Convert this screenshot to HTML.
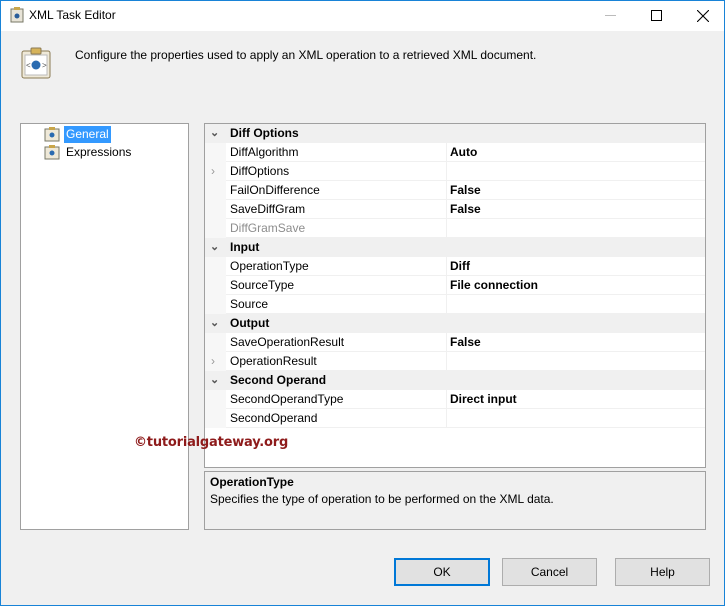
<!DOCTYPE html>
<html><head><style>
*{margin:0;padding:0;box-sizing:border-box}
body{width:725px;height:606px;background:#f0f0f0;font-family:"Liberation Sans",sans-serif;font-size:12px;color:#000;position:relative;overflow:hidden}
.abs{position:absolute}
#win{left:0;top:0;width:725px;height:606px;border:1px solid #1883d7}
#title{left:1px;top:1px;width:723px;height:30px;background:#fff}
.row{position:absolute;left:0;width:500px;height:19px;line-height:18px}
.cat{background:#f0f0f0;font-weight:bold}
.prop{background:#fff;border-bottom:1px solid #f0f0f0}
.prop .n{position:absolute;left:25px}
.prop .v{position:absolute;left:241px;font-weight:bold}
.prop .sep{position:absolute;left:240px;top:0;width:1px;height:19px;background:#f0f0f0}
.cat .n{position:absolute;left:25px}
.arr{position:absolute;left:5px;top:0;color:#555;font-size:11px}
.btn{position:absolute;top:558px;height:28px;background:#e1e1e1;border:1px solid #adadad;text-align:center;line-height:26px;font-size:12px}
</style></head><body>
<div id="win" class="abs"></div>
<div id="title" class="abs">
<svg class="abs" style="left:9px;top:6px" width="14" height="16"><rect x="1" y="2" width="12" height="13" fill="#e8e4d8" stroke="#776"/><rect x="4" y="0" width="6" height="3" fill="#c9a64a"/><circle cx="7" cy="9" r="2.5" fill="#2a5d9a"/></svg>
<div class="abs" style="left:28px;top:7px;font-size:12px">XML Task Editor</div>
<div class="abs" style="left:604px;top:14px;width:11px;height:1px;background:#bbb"></div>
<div class="abs" style="left:650px;top:9px;width:11px;height:11px;border:1px solid #000"></div>
<svg class="abs" style="left:696px;top:9px" width="12" height="12"><path d="M0 0L12 12M12 0L0 12" stroke="#000" stroke-width="1.1"/></svg>
</div>
<svg class="abs" style="left:21px;top:47px" width="30" height="32"><rect x="1" y="4" width="28" height="27" rx="2" fill="#efe9d8" stroke="#8a7a55"/><rect x="4" y="8" width="22" height="20" fill="#fff" stroke="#bbb"/><rect x="10" y="1" width="10" height="6" rx="1" fill="#d6b35a" stroke="#8a7a55"/><circle cx="15" cy="18" r="4.5" fill="#2a6bb0"/><text x="5" y="21" font-size="8" fill="#555">&lt;</text><text x="21" y="21" font-size="8" fill="#555">&gt;</text></svg>
<div class="abs" style="left:75px;top:48px">Configure the properties used to apply an XML operation to a retrieved XML document.</div>
<div class="abs" style="left:20px;top:123px;width:169px;height:407px;background:#fff;border:1px solid #a0a0a0">
<svg class="abs" style="left:23px;top:2px" width="16" height="16"><rect x="1" y="3" width="14" height="12" fill="#efe9d8" stroke="#776"/><rect x="5" y="1" width="6" height="3" fill="#c9a64a"/><circle cx="8" cy="9" r="2.5" fill="#2a6bb0"/></svg>
<div class="abs" style="left:43px;top:2px;background:#3399ff;color:#fff;padding:0 2px;height:17px;line-height:16px">General</div>
<svg class="abs" style="left:23px;top:20px" width="16" height="16"><rect x="1" y="3" width="14" height="12" fill="#efe9d8" stroke="#776"/><rect x="5" y="1" width="6" height="3" fill="#c9a64a"/><circle cx="8" cy="9" r="2.5" fill="#2a6bb0"/></svg>
<div class="abs" style="left:45px;top:21px">Expressions</div>
</div>
<div class="abs" style="left:204px;top:123px;width:502px;height:345px;background:#fff;border:1px solid #a0a0a0;overflow:hidden">
<div class="abs" style="left:0;top:0;width:21px;height:304px;background:#f7f7f7"></div>
<div class="row cat" style="top:0"><span class="arr">&#8964;</span><span class="n">Diff Options</span></div>
<div class="row prop" style="top:19px;left:21px"><span class="n" style="left:4px">DiffAlgorithm</span><span class="sep" style="left:220px"></span><span class="v" style="left:224px">Auto</span></div>
<div class="row prop" style="top:38px;left:21px"><span class="n" style="left:4px">DiffOptions</span><span class="sep" style="left:220px"></span></div>
<div class="abs" style="left:6px;top:40px;color:#999">&#8250;</div>
<div class="row prop" style="top:57px;left:21px"><span class="n" style="left:4px">FailOnDifference</span><span class="sep" style="left:220px"></span><span class="v" style="left:224px">False</span></div>
<div class="row prop" style="top:76px;left:21px"><span class="n" style="left:4px">SaveDiffGram</span><span class="sep" style="left:220px"></span><span class="v" style="left:224px">False</span></div>
<div class="row prop" style="top:95px;left:21px"><span class="n" style="left:4px;color:#8d8d8d">DiffGramSave</span><span class="sep" style="left:220px"></span></div>
<div class="row cat" style="top:114px"><span class="arr">&#8964;</span><span class="n">Input</span></div>
<div class="row prop" style="top:133px;left:21px"><span class="n" style="left:4px">OperationType</span><span class="sep" style="left:220px"></span><span class="v" style="left:224px">Diff</span></div>
<div class="row prop" style="top:152px;left:21px"><span class="n" style="left:4px">SourceType</span><span class="sep" style="left:220px"></span><span class="v" style="left:224px">File connection</span></div>
<div class="row prop" style="top:171px;left:21px"><span class="n" style="left:4px">Source</span><span class="sep" style="left:220px"></span></div>
<div class="row cat" style="top:190px"><span class="arr">&#8964;</span><span class="n">Output</span></div>
<div class="row prop" style="top:209px;left:21px"><span class="n" style="left:4px">SaveOperationResult</span><span class="sep" style="left:220px"></span><span class="v" style="left:224px">False</span></div>
<div class="row prop" style="top:228px;left:21px"><span class="n" style="left:4px">OperationResult</span><span class="sep" style="left:220px"></span></div>
<div class="abs" style="left:6px;top:230px;color:#999">&#8250;</div>
<div class="row cat" style="top:247px"><span class="arr">&#8964;</span><span class="n">Second Operand</span></div>
<div class="row prop" style="top:266px;left:21px"><span class="n" style="left:4px">SecondOperandType</span><span class="sep" style="left:220px"></span><span class="v" style="left:224px">Direct input</span></div>
<div class="row prop" style="top:285px;left:21px"><span class="n" style="left:4px">SecondOperand</span><span class="sep" style="left:220px"></span></div>
</div>
<div class="abs" style="left:204px;top:471px;width:502px;height:59px;border:1px solid #a0a0a0">
<div class="abs" style="left:5px;top:3px;font-weight:bold">OperationType</div>
<div class="abs" style="left:5px;top:20px">Specifies the type of operation to be performed on the XML data.</div>
</div>
<div class="abs" style="left:134px;top:435px;color:#8e1b1b;font-weight:bold;font-size:13px;font-family:'DejaVu Sans',sans-serif;letter-spacing:-0.2px">©tutorialgateway.org</div>
<div class="btn" style="left:394px;width:96px;border:2px solid #0078d7;line-height:24px">OK</div>
<div class="btn" style="left:502px;width:95px">Cancel</div>
<div class="btn" style="left:615px;width:95px">Help</div>
</body></html>
